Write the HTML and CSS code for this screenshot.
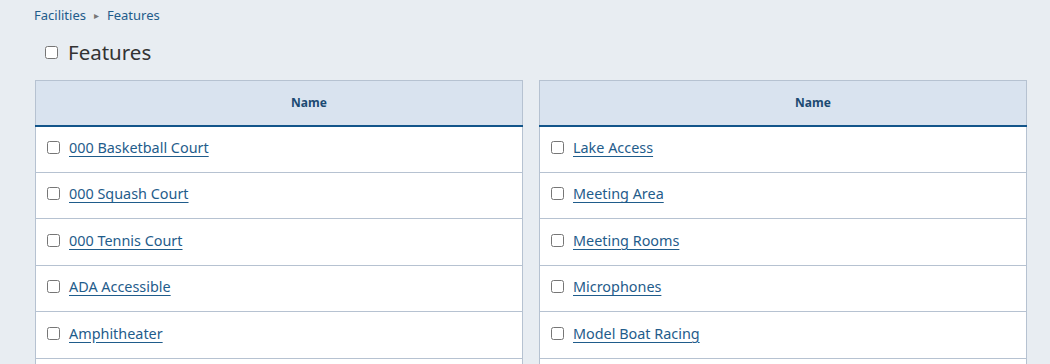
FILE: index.html
```html
<!DOCTYPE html>
<html lang="en">

<head>
    <meta charset="UTF-8">
    <meta name="viewport" content="width=device-width, initial-scale=1.0">
    <title>Features</title>
    <link rel="stylesheet" href="styles.css">
</head>

<body>
    <div class="page">
        <div class="crumbs">
            <a href="#">Facilities</a>
            <span class="sep">&#9656;</span>
            <a href="#">Features</a>
        </div>

        <h1 class="page-title">
            <input type="checkbox">
            <span>Features</span>
        </h1>

        <div class="grid">
            <table class="list">
                <thead>
                    <tr><th>Name</th></tr>
                </thead>
                <tbody>
                    <tr><td><label><input type="checkbox"><a href="#">000 Basketball Court</a></label></td></tr>
                    <tr><td><label><input type="checkbox"><a href="#">000 Squash Court</a></label></td></tr>
                    <tr><td><label><input type="checkbox"><a href="#">000 Tennis Court</a></label></td></tr>
                    <tr><td><label><input type="checkbox"><a href="#">ADA Accessible</a></label></td></tr>
                    <tr><td><label><input type="checkbox"><a href="#">Amphitheater</a></label></td></tr>
                    <tr><td><label><input type="checkbox"><a href="#">Archery Range</a></label></td></tr>
                </tbody>
            </table>

            <table class="list">
                <thead>
                    <tr><th>Name</th></tr>
                </thead>
                <tbody>
                    <tr><td><label><input type="checkbox"><a href="#">Lake Access</a></label></td></tr>
                    <tr><td><label><input type="checkbox"><a href="#">Meeting Area</a></label></td></tr>
                    <tr><td><label><input type="checkbox"><a href="#">Meeting Rooms</a></label></td></tr>
                    <tr><td><label><input type="checkbox"><a href="#">Microphones</a></label></td></tr>
                    <tr><td><label><input type="checkbox"><a href="#">Model Boat Racing</a></label></td></tr>
                    <tr><td><label><input type="checkbox"><a href="#">Multi-Purpose Field</a></label></td></tr>
                </tbody>
            </table>
        </div>
    </div>
</body>

</html>
```

FILE: styles.css
```css
* {
    padding: 0;
    margin: 0;
    box-sizing: border-box;
}

body {
    background-color: #e8edf2;
    font-family: "Noto Sans", "Open Sans", sans-serif;
    color: #333;
}

.page {
    padding: 6px 23px 0 35px;
}

/* breadcrumb */
.crumbs {
    font-size: 13px;
    line-height: 18px;
    display: flex;
    align-items: center;
    margin-left: -1px;
}

.crumbs a {
    color: #1f5c8b;
    text-decoration: none;
}

.crumbs .sep {
    color: #777;
    font-size: 10px;
    margin: 0 8px;
}

.page-title {
    display: flex;
    align-items: center;
    font-size: 20.5px;
    font-weight: normal;
    color: #333;
    height: 36px;
    margin: 10px 0 10px 10px;
}

.page-title input {
    width: 13px;
    height: 13px;
    margin: 0 10px 0 0;
}

.grid {
    display: grid;
    grid-template-columns: 1fr 1fr;
    gap: 16px;
}

.list {
    width: 100%;
    border-collapse: collapse;
    background-color: #fff;
    border: 1px solid #b6c2d1;
}

.list th {
    background-color: #d9e3ef;
    color: #1c4a72;
    font-size: 12px;
    font-weight: bold;
    height: 45px;
    padding: 0 0 0 60px;
    border-bottom: 2px solid #13558a;
}

.list td {
    height: 46.5px;
    padding: 0 11px 3px;
    border-top: 1px solid #b6c2d1;
    font-size: 14.4px;
}

.list tbody tr:first-child td {
    border-top: none;
}

.list label {
    display: flex;
    align-items: center;
}

.list input {
    width: 13px;
    height: 13px;
    margin: 0 9px 0 0;
}

.list a {
    color: #1f5c8b;
    text-underline-offset: 3px;
}
```
